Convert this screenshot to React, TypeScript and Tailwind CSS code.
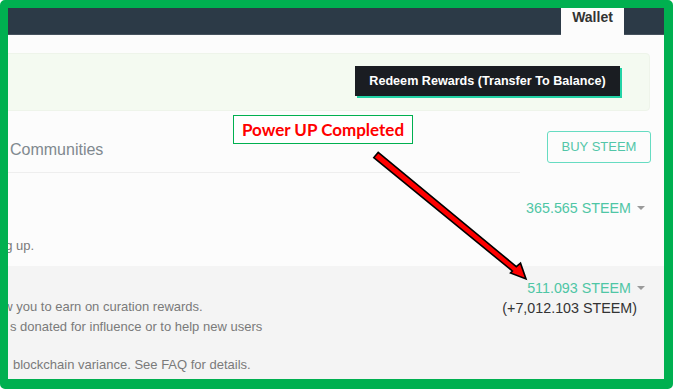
import type { ReactNode } from 'react'

const SANS = { fontFamily: '"Liberation Sans", Arial, sans-serif' }

function Caret() {
  return <span className="ml-[6px] inline-block h-0 w-0 border-x-[4px] border-t-[4px] border-x-transparent border-t-[#9a9a9a] align-middle" />
}

function Amount({ children }: { children: ReactNode }) {
  return (
    <div className="flex items-center justify-end text-[14.3px] leading-[20px] text-[#4fc6a5]">
      {children}
      <Caret />
    </div>
  )
}

// Pfeil aus der Anmerkung (liegt über dem Inhalt)
function Arrow() {
  return (
    <svg className="pointer-events-none absolute left-0 top-0" width="673" height="389" viewBox="0 0 673 389">
      <polygon
        points="378.2,152.4 516.3,266.6 520.5,263.2 526,279 510.5,273 512.4,271 373.8,157.6"
        fill="#ff0000"
        stroke="#000"
        strokeWidth="1.6"
        strokeLinejoin="miter"
      />
    </svg>
  )
}

export default function App() {
  return (
    <div className="relative h-[389px] w-[673px] bg-white" style={SANS}>
      <div className="h-full w-full rounded-[5px] border-b-[10px] border-l-[8px] border-r-[9px] border-t-[8px] border-[#00b050]">
        <div className="flex h-full w-full flex-col overflow-hidden bg-[#fcfcfc]">
          <header className="flex h-[27px] shrink-0 justify-end border-b border-[#46525e] bg-[#2c3a47]">
            <div className="mr-[40px] h-[27px] w-[63px] bg-[#fcfcfc] pt-[1px] text-center text-[14px] font-bold leading-[16px] text-[#333]">
              Wallet
            </div>
          </header>

          <div className="-ml-[10px] mr-[14px] mt-[18px] flex h-[58px] shrink-0 justify-end rounded-[4px] border border-[#eef4ea] bg-[#f4faf1] pr-[29px] pt-[12px]">
            <button className="h-[30px] w-[265px] bg-[#1a1d22] text-[12.6px] font-bold text-white shadow-[2px_2px_0_#22d3a6]">
              Redeem Rewards (Transfer To Balance)
            </button>
          </div>

          <div className="flex h-[62px] shrink-0">
            <div className="flex-1 border-b border-[#eeeeee] pl-[2px] pt-[29px] text-[16px] leading-[20px] text-[#80898f]">
              Communities
            </div>
            <div className="pl-[27px] pr-[13px] pt-[20px]">
              <button className="h-[32px] w-[104px] rounded-[3px] border border-[#66dcc2] text-[13px] text-[#52c6a8]">
                BUY STEEM
              </button>
            </div>
          </div>

          <div className="flex h-[93px] shrink-0 justify-between">
            <div className="-ml-[10px] pt-[64px] text-[13px] leading-[18px] text-[#7a7a7a]">ng up.</div>
            <div className="pr-[19px] pt-[25px]">
              <Amount>365.565 STEEM</Amount>
            </div>
          </div>

          <div className="flex flex-1 justify-between bg-[#f4f4f4]">
            <div className="pt-[31px] text-[13px] leading-[20px] text-[#7a7a7a]">
              <div className="-ml-[25px] whitespace-nowrap">allow you to earn on curation rewards.</div>
              <div className="ml-[2px] whitespace-nowrap">s donated for influence or to help new users</div>
              <div className="ml-[5px] mt-[18px] whitespace-nowrap">blockchain variance. See FAQ for details.</div>
            </div>
            <div className="pr-[19px] pt-[12px]">
              <Amount>511.093 STEEM</Amount>
              <div className="pr-[8px] text-right text-[14.3px] leading-[21px] text-[#333]">(+7,012.103 STEEM)</div>
            </div>
          </div>
        </div>
      </div>

      <div
        className="absolute left-[233px] top-[115px] flex h-[29px] w-[180px] items-center justify-center border border-[#00b050] bg-white text-[17px] font-bold text-[#ff0000]"
        style={{ fontFamily: 'Lato, "Open Sans", sans-serif' }}
      >
        Power UP Completed
      </div>
      <Arrow />
    </div>
  )
}
